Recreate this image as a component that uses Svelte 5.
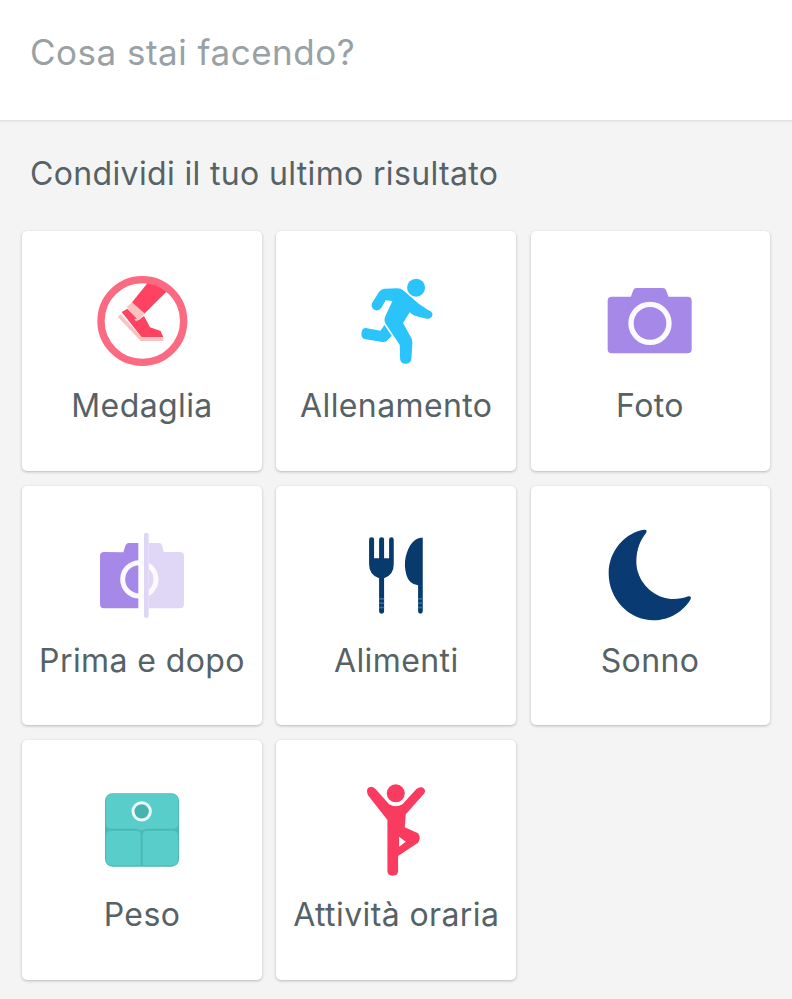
<script>
  const items = [
    { id: 'medal', label: 'Medaglia', vb: '6 3 420 360' },
    { id: 'run', label: 'Allenamento', vb: '-41.25 -12 420 360' },
    { id: 'photo', label: 'Foto', vb: '-30 -27 420 360' },
    { id: 'ba', label: 'Prima e dopo', vb: '-39 -12 420 360' },
    { id: 'food', label: 'Alimenti', vb: '-71.25 -27 420 360' },
    { id: 'moon', label: 'Sonno', vb: '-45 -12 420 360' },
    { id: 'scale', label: 'Peso', vb: '-54 -30 420 360' },
    { id: 'yoga', label: 'Attività oraria', vb: '-71.25 -15 420 360' }
  ];
</script>

<div class="page">
  <header class="top">Cosa stai facendo?</header>
  <h2 class="title">Condividi il tuo ultimo risultato</h2>
  <div class="grid">
    {#each items as it}
      <div class="card">
        <svg class="icon" viewBox={it.vb}>
          {#if it.id === 'medal'}
            <defs>
              <clipPath id="medalclip"><circle cx="217" cy="183" r="120" /></clipPath>
            </defs>
            <g clip-path="url(#medalclip)">
              <path d="M240 60 L300 85 L222 162 L185 128 Z" fill="#fd4361" />
            </g>
            <path d="M170 141 L186 127 L225 161 L203 180 Z" fill="#fbc3bf" />
            <path d="M155 156 L172 146 L205 181 L222 168 L240 202 L272 213 L280 232 L215 232 Z" fill="#fd4361" />
            <path d="M192 178 L214 171 L212 177 L198 184 Z" fill="#fbc3bf" />
            <path d="M143 170 L152 163 L215 232 L280 232 L280 243 L212 243 Z" fill="#fbc3bf" />
            <circle cx="217" cy="183" r="124" fill="none" stroke="#fb6a80" stroke-width="22" />
          {:else if it.id === 'run'}
            <path d="M97 114 L118 80 Q124 72 134 71 L172 70 Q184 70 192 77 L237 116 L265 135 Q280 140 278 151 Q275 163 260 161 L228 153 Q218 150 210 142 L190 174 L215 220 Q218 226 218 234 L215 281 Q213 296 198 296 Q182 296 181 281 L180 240 L140 180 Q131 168 136 155 L158 108 L138 106 L124 130 Q115 140 103 134 Q92 127 97 114 Z" fill="#2bc4fa" />
            <path d="M78 189 L122 197 L134 180 L156 212 L140 229 Q136 232 128 231 L78 223 Q64 220 65 206 Q66 189 78 189 Z" fill="#2bc4fa" />
            <circle cx="229" cy="68" r="27" fill="#2bc4fa" />
          {:else if it.id === 'photo'}
            <path d="M122 82 L130 60 Q132 54 140 54 L218 54 Q226 54 228 60 L236 82 Z" fill="#a588e7" />
            <rect x="53" y="80" width="252" height="170" rx="12" fill="#a588e7" />
            <circle cx="180" cy="160" r="57" fill="none" stroke="#fbfaff" stroke-width="16" />
          {:else if it.id === 'ba'}
            <path d="M115 97 L121 78 Q124 69 132 69 L160 69 L160 265 L57 265 Q45 265 45 253 L45 108 Q45 96 57 96 Z" fill="#a588e7" />
            <path d="M191 69 L222 69 Q230 69 232 78 L236 96 L285 96 Q297 96 297 108 L297 253 Q297 265 285 265 L191 265 Z" fill="#e0d7f7" />
            <circle cx="163" cy="178" r="50" fill="none" stroke="#fbfaff" stroke-width="15" />
            <rect x="177" y="38" width="14" height="256" rx="7" fill="#dfd6f6" />
          {:else if it.id === 'food'}
            <path d="M58 44 Q58 37 65 37 Q73 37 73 44 L73 100 L88 100 L88 44 Q88 37 95 37 Q103 37 103 44 L103 100 L118 100 L118 44 Q118 37 125 37 Q132 37 132 44 L132 118 Q132 150 103 160 L103 259 Q103 266 95 266 Q88 266 88 259 L88 160 Q58 150 58 118 Z" fill="#073a6d" />
            <path d="M219 38 L219 259 Q219 266 212 266 Q205 266 205 259 L205 181 Q178 178 170 150 Q162 120 168 95 Q180 45 212 38 Z" fill="#073a6d" />
            <g fill="#2f6f9e">
              <rect x="88" y="219" width="15" height="5" />
              <rect x="88" y="232" width="15" height="5" />
              <rect x="88" y="245" width="15" height="5" />
              <rect x="205" y="219" width="14" height="5" />
              <rect x="205" y="232" width="14" height="5" />
              <rect x="205" y="245" width="14" height="5" />
            </g>
          {:else if it.id === 'moon'}
            <path d="M148 29 C 95 36 41 88 41 160 C 41 240 105 301 175 301 C 225 301 268 272 287 237 Q 290 228 280 229 C 255 239 225 240 203 232 C 155 215 124 170 124 125 C 124 90 135 62 153 39 Q 158 28 148 29 Z" fill="#0a3a72" />
          {:else if it.id === 'scale'}
            <rect x="45" y="40" width="222" height="220" rx="22" fill="#4ab9b6" />
            <path d="M48 62 Q48 42 68 42 L244 42 Q264 42 264 62 L264 132 Q264 146 250 146 L172 146 L155 151 L138 146 L62 146 Q48 146 48 132 Z" fill="#59cdc9" />
            <path d="M48 168 Q48 152 64 152 L140 152 Q152 152 152 164 L152 256 L68 256 Q48 256 48 236 Z" fill="#59cdc9" />
            <path d="M264 168 Q264 152 248 152 L170 152 Q158 152 158 164 L158 256 L244 256 Q264 256 264 236 Z" fill="#59cdc9" />
            <circle cx="155" cy="94" r="26" fill="#47b3b1" stroke="#eafbfa" stroke-width="9" />
          {:else}
            <circle cx="138" cy="55" r="27" fill="#fa3b60" />
            <path fill-rule="evenodd" d="M52 50 Q50 36 65 35 Q72 36 78 43 L118 88 Q138 100 158 88 L200 42 Q208 35 217 37 Q230 43 224 55 L168 118 L165 157 L205 175 Q215 190 205 203 L145 243 L145 288 Q145 302 129 302 Q113 302 113 288 L113 135 L56 62 Q52 56 52 50 Z M148 185 L168 200 L148 215 Z" fill="#fa3b60" />
          {/if}
        </svg>
        <div class="label">{it.label}</div>
      </div>
    {/each}
  </div>
</div>

<style>
  :global(body) {
    margin: 0;
    background: #f4f4f4;
  }
  .page {
    width: 792px;
    height: 999px;
    overflow: hidden;
    background: #f4f4f4;
    font-family: Inter, "Noto Sans", sans-serif;
  }
  .top {
    height: 121px;
    box-sizing: border-box;
    padding: 29px 30px 0;
    background: #fff;
    color: #98a1a4;
    font-size: 35px;
    letter-spacing: 0.5px;
    line-height: 46px;
    border-bottom: 1px solid #e2e2e2;
    box-shadow: 0 1px 2px rgba(0, 0, 0, 0.06);
  }
  .title {
    margin: 0;
    padding: 32px 30px 0;
    height: 78px;
    box-sizing: content-box;
    color: #566266;
    font-size: 32px;
    letter-spacing: 0.35px;
    line-height: 42px;
    font-weight: 400;
  }
  .grid {
    display: grid;
    grid-template-columns: 240px 240px 239px;
    grid-template-rows: 240px 239px 240px;
    column-gap: 14.25px;
    row-gap: 15px;
    padding: 0 22px;
  }
  .card {
    background: #fff;
    border-radius: 5px;
    box-shadow: 0 1px 3px rgba(0, 0, 0, 0.25);
    display: flex;
    flex-direction: column;
    align-items: center;
    padding-top: 30px;
    box-sizing: border-box;
  }
  .icon {
    width: 140px;
    height: 120px;
    display: block;
    flex: none;
  }
  .label {
    margin-top: 4px;
    color: #566266;
    font-size: 32px;
    letter-spacing: 0.4px;
    line-height: 42px;
    white-space: nowrap;
  }
</style>
